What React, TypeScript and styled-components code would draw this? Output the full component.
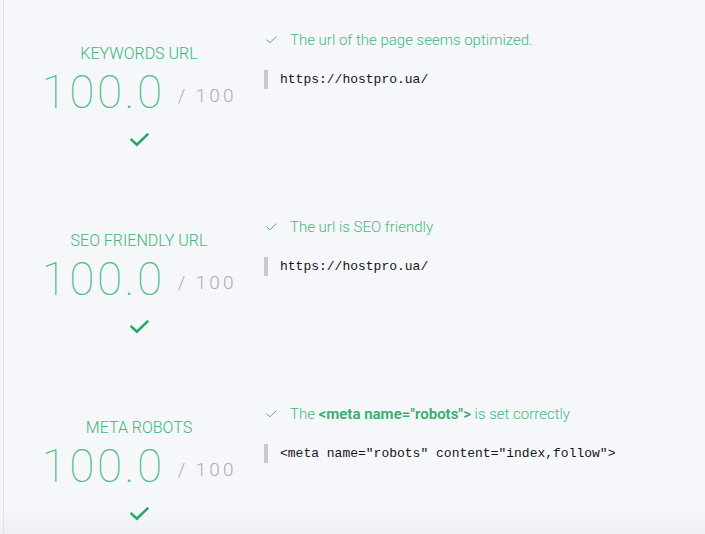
import styled, { createGlobalStyle } from "styled-components";

const GlobalStyle = createGlobalStyle`
  html, body {
    margin: 0;
    padding: 0;
    height: 100%;
  }
  body {
    font-family: Roboto, "Noto Sans", sans-serif;
    background: linear-gradient(#f5f7fb 0, #f5f7fb 505px, #eef0f5 534px);
  }
`;

interface Check {
  title: string;
  message: string;
  bold?: string;
  after?: string;
  code: string;
}

const checks: Check[] = [
  {
    title: "KEYWORDS URL",
    message: "The url of the page seems optimized.",
    code: "https://hostpro.ua/",
  },
  {
    title: "SEO FRIENDLY URL",
    message: "The url is SEO friendly",
    code: "https://hostpro.ua/",
  },
  {
    title: "META ROBOTS",
    message: "The ",
    bold: '<meta name="robots">',
    after: " is set correctly",
    code: '<meta name="robots" content="index,follow">',
  },
];

function CheckMark({ size, weight }: { size: number; weight: number }) {
  return (
    <svg width={size} height={size * 0.72} viewBox="0 0 18 13" fill="none">
      <path
        d="M1.5 6.5 L6.5 11.2 L16.5 1.5"
        stroke="currentColor"
        strokeWidth={weight}
        strokeLinecap="square"
      />
    </svg>
  );
}

function App() {
  return (
    <>
      <GlobalStyle />
      <Page>
        {checks.map((c) => (
          <Section key={c.title}>
            <ScoreColumn>
              <Title>{c.title}</Title>
              <ScoreRow>
                <Score>100.0</Score>
                <Max>/ 100</Max>
              </ScoreRow>
              <BigCheck>
                <CheckMark size={19} weight={2.4} />
              </BigCheck>
            </ScoreColumn>

            <DetailColumn>
              <Message>
                <SmallCheck>
                  <CheckMark size={11} weight={1.6} />
                </SmallCheck>
                <span>
                  {c.message}
                  {c.bold && <Strong>{c.bold}</Strong>}
                  {c.after}
                </span>
              </Message>
              <Code>{c.code}</Code>
            </DetailColumn>
          </Section>
        ))}
      </Page>
    </>
  );
}

export default App;

const Page = styled.div`
  margin-left: 3px;
  border-left: 1px solid #dfe2e8;
  height: 534px;
  overflow: hidden;
  display: flex;
  flex-direction: column;
  box-sizing: border-box;
`;

const Section = styled.div`
  display: flex;
  flex-shrink: 0;
  height: 187px;
  padding-top: 30px;
  box-sizing: border-box;

  &:last-child {
    height: auto;
  }
`;

const ScoreColumn = styled.div`
  width: 260px;
  flex-shrink: 0;
  padding-left: 10px;
  padding-top: 14px;
  box-sizing: border-box;
  display: flex;
  flex-direction: column;
  align-items: center;
`;

const Title = styled.div`
  font-size: 16px;
  font-weight: 300;
  color: #3fb577;
  line-height: 20px;
`;

const ScoreRow = styled.div`
  display: flex;
  align-items: center;
  margin-top: 4px;
`;

const Score = styled.span`
  font-size: 46px;
  font-weight: 100;
  color: #4dbb82;
  line-height: 48px;
  letter-spacing: 2.5px;
`;

const Max = styled.span`
  font-size: 19px;
  font-weight: 300;
  color: #adadad;
  letter-spacing: 3px;
  line-height: 20px;
  margin-left: 13px;
  margin-top: 8px;
`;

const BigCheck = styled.div`
  color: #27a862;
  margin-top: 17px;
  display: flex;
`;

const DetailColumn = styled.div`
  display: flex;
  flex-direction: column;
`;

const Message = styled.div`
  display: flex;
  align-items: center;
  font-size: 15px;
  font-weight: 300;
  color: #46b77c;
  line-height: 20px;
  padding-left: 2px;
`;

const SmallCheck = styled.span`
  display: flex;
  color: #45b57a;
  margin-right: 13px;
`;

const Strong = styled.b`
  font-weight: 600;
  color: #35ad6c;
`;

const Code = styled.div`
  margin-top: 20px;
  border-left: 4px solid #c8c9cc;
  padding-left: 12px;
  font-family: "Liberation Mono", "Courier New", monospace;
  font-size: 13px;
  line-height: 19px;
  color: #151515;
`;
